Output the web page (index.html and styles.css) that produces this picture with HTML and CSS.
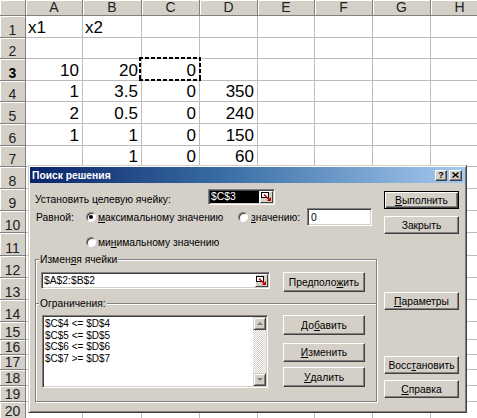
FILE: index.html
```html
<!DOCTYPE html>
<html lang="ru">
<head>
<meta charset="utf-8">
<title>Поиск решения</title>
<link rel="stylesheet" href="styles.css">
</head>
<body>
<div class="sheet">
  <div class="corner"></div>
  <div class="ch">A</div><div class="ch">B</div><div class="ch">C</div><div class="ch">D</div><div class="ch">E</div><div class="ch">F</div><div class="ch">G</div><div class="ch">H</div>

  <div class="rh">1</div><div class="c t">x1</div><div class="c t">x2</div><div class="c"></div><div class="c"></div><div class="c"></div><div class="c"></div><div class="c"></div><div class="c"></div>
  <div class="rh">2</div><div class="c"></div><div class="c"></div><div class="c"></div><div class="c"></div><div class="c"></div><div class="c"></div><div class="c"></div><div class="c"></div>
  <div class="rh act">3</div><div class="c n">10</div><div class="c n">20</div><div class="c n cur">0</div><div class="c"></div><div class="c"></div><div class="c"></div><div class="c"></div><div class="c"></div>
  <div class="rh">4</div><div class="c n">1</div><div class="c n">3.5</div><div class="c n">0</div><div class="c n">350</div><div class="c"></div><div class="c"></div><div class="c"></div><div class="c"></div>
  <div class="rh">5</div><div class="c n">2</div><div class="c n">0.5</div><div class="c n">0</div><div class="c n">240</div><div class="c"></div><div class="c"></div><div class="c"></div><div class="c"></div>
  <div class="rh">6</div><div class="c n">1</div><div class="c n">1</div><div class="c n">0</div><div class="c n">150</div><div class="c"></div><div class="c"></div><div class="c"></div><div class="c"></div>
  <div class="rh">7</div><div class="c"></div><div class="c n">1</div><div class="c n">0</div><div class="c n">60</div><div class="c"></div><div class="c"></div><div class="c"></div><div class="c"></div>
  <div class="rh">8</div><div class="c"></div><div class="c"></div><div class="c"></div><div class="c"></div><div class="c"></div><div class="c"></div><div class="c"></div><div class="c"></div>
  <div class="rh">9</div><div class="c"></div><div class="c"></div><div class="c"></div><div class="c"></div><div class="c"></div><div class="c"></div><div class="c"></div><div class="c"></div>
  <div class="rh">10</div><div class="c"></div><div class="c"></div><div class="c"></div><div class="c"></div><div class="c"></div><div class="c"></div><div class="c"></div><div class="c"></div>
  <div class="rh">11</div><div class="c"></div><div class="c"></div><div class="c"></div><div class="c"></div><div class="c"></div><div class="c"></div><div class="c"></div><div class="c"></div>
  <div class="rh">12</div><div class="c"></div><div class="c"></div><div class="c"></div><div class="c"></div><div class="c"></div><div class="c"></div><div class="c"></div><div class="c"></div>
  <div class="rh">13</div><div class="c"></div><div class="c"></div><div class="c"></div><div class="c"></div><div class="c"></div><div class="c"></div><div class="c"></div><div class="c"></div>
  <div class="rh">14</div><div class="c"></div><div class="c"></div><div class="c"></div><div class="c"></div><div class="c"></div><div class="c"></div><div class="c"></div><div class="c"></div>
  <div class="rh">15</div><div class="c"></div><div class="c"></div><div class="c"></div><div class="c"></div><div class="c"></div><div class="c"></div><div class="c"></div><div class="c"></div>
  <div class="rh">16</div><div class="c"></div><div class="c"></div><div class="c"></div><div class="c"></div><div class="c"></div><div class="c"></div><div class="c"></div><div class="c"></div>
  <div class="rh">17</div><div class="c"></div><div class="c"></div><div class="c"></div><div class="c"></div><div class="c"></div><div class="c"></div><div class="c"></div><div class="c"></div>
  <div class="rh">18</div><div class="c"></div><div class="c"></div><div class="c"></div><div class="c"></div><div class="c"></div><div class="c"></div><div class="c"></div><div class="c"></div>
  <div class="rh">19</div><div class="c"></div><div class="c"></div><div class="c"></div><div class="c"></div><div class="c"></div><div class="c"></div><div class="c"></div><div class="c"></div>
  <div class="rh">20</div><div class="c"></div><div class="c"></div><div class="c"></div><div class="c"></div><div class="c"></div><div class="c"></div><div class="c"></div><div class="c"></div>
</div>

<div class="dlg">
  <div class="title">
    <span class="title-text">Поиск решения</span>
    <span class="tbtn tq">?</span>
    <span class="tbtn tx"><svg width="7" height="6" viewBox="0 0 7 6"><path d="M0.5 0.5 L6.5 5.5 M6.5 0.5 L0.5 5.5" stroke="#000" stroke-width="1.4" fill="none"/></svg></span>
  </div>
  <div class="dbody">
    <div class="main">
      <div class="r-target">
        <span class="lbl-target">Установить целевую ячейку:</span>
        <span class="field target">
          <span class="sel">$C$3</span>
          <span class="refbtn"><svg width="11" height="10" viewBox="0 0 11 10"><rect x="0.5" y="0.5" width="7" height="5" fill="#fff" stroke="#000"/><path d="M3 2.5 L8 7.5" stroke="#c00000" stroke-width="1.5" fill="none"/><path d="M10 9 L10 5 L6 9 Z" fill="#c00000"/></svg></span>
        </span>
      </div>
      <div class="r-eq">
        <span class="lbl-eq">Равной:</span>
        <span class="opt opt-max"><span class="radio on"></span><span><u>м</u>аксимальному значению</span></span>
        <span class="opt opt-val"><span class="radio"></span><span><u>з</u>начению:</span></span>
        <span class="field val">0</span>
      </div>
      <div class="r-min">
        <span class="opt"><span class="radio"></span><span>ми<u>н</u>имальному значению</span></span>
      </div>
      <div class="frames">
        <div class="sect s1">
          <span class="legend">Измен<u>я</u>я ячейки</span>
          <div class="srow">
            <span class="field cells">
              <span class="ftext">$A$2:$B$2</span>
              <span class="refbtn"><svg width="11" height="10" viewBox="0 0 11 10"><rect x="0.5" y="0.5" width="7" height="5" fill="#fff" stroke="#000"/><path d="M3 2.5 L8 7.5" stroke="#c00000" stroke-width="1.5" fill="none"/><path d="M10 9 L10 5 L6 9 Z" fill="#c00000"/></svg></span>
            </span>
            <span class="btn guess">Предполо<u>ж</u>ить</span>
          </div>
        </div>
        <div class="sect s2">
          <span class="legend">Ограничения:</span>
          <div class="srow">
            <div class="list">
              <div class="items">
                <div>$C$4 &lt;= $D$4</div>
                <div>$C$5 &lt;= $D$5</div>
                <div>$C$6 &lt;= $D$6</div>
                <div>$C$7 &gt;= $D$7</div>
              </div>
              <div class="sb">
                <span class="sb-btn"><span class="arr-up"></span></span>
                <span class="sb-track"></span>
                <span class="sb-btn"><span class="arr-dn"></span></span>
              </div>
            </div>
            <div class="btncol">
              <span class="btn b-add">До<u>б</u>авить</span>
              <span class="btn b-edit"><u>И</u>зменить</span>
              <span class="btn b-del"><u>У</u>далить</span>
            </div>
          </div>
        </div>
      </div>
    </div>
    <div class="side">
      <span class="btn def"><u>В</u>ыполнить</span>
      <span class="btn b-close">Закрыть</span>
      <span class="btn b-params"><u>П</u>араметры</span>
      <span class="btn b-restore">Восс<u>т</u>ановить</span>
      <span class="btn b-help"><u>С</u>правка</span>
    </div>
  </div>
</div>
</body>
</html>
```

FILE: styles.css
```css
* { box-sizing: border-box; }
html, body { margin: 0; padding: 0; }
body {
  width: 477px;
  height: 418px;
  overflow: hidden;
  position: relative;
  background: #fff;
  font-family: "Liberation Sans", Arial, sans-serif;
  color: #000;
}

/* ---------- spreadsheet ---------- */
.sheet {
  display: grid;
  grid-template-columns: 26px 57px 59px 58px 58px 57px 58px 58px 58px;
  grid-template-rows: 16px 22px 21px 22px 21px 22px 22px 21px 22px 22px 22px 23px 22px 22px 22px 18px 15px 15px 16px 16px 17px;
  width: 489px;
}
.sheet > div {
  border-right: 1px solid #bcbcbc;
  border-bottom: 1px solid #bcbcbc;
  overflow: hidden;
}
.sheet .corner,
.sheet .ch,
.sheet .rh {
  background: #d4d0c8;
  border-right-color: #808080;
  border-bottom-color: #808080;
  box-shadow: inset 1px 1px #fff;
  color: #222;
}
.ch {
  display: flex;
  justify-content: center;
  align-items: flex-end;
  font-size: 14px;
  line-height: 15px;
}
.rh {
  display: flex;
  justify-content: center;
  align-items: flex-end;
  font-size: 14px;
  line-height: 14px;
}
.rh.act { font-weight: bold; color: #000; }
.c {
  display: flex;
  align-items: flex-end;
  font-size: 17px;
  line-height: 17px;
  padding-bottom: 1px;
}
.c.t { padding-left: 2px; }
.c.n { justify-content: flex-end; padding-right: 3px; }
.sheet .cur { position: relative; overflow: visible; }
.cur::after {
  content: "";
  position: absolute;
  top: -2px; right: -2px; bottom: -1px; left: -3px;
  background:
    repeating-linear-gradient(90deg, #000 0 4px, transparent 4px 6px) top left / 100% 2px no-repeat,
    repeating-linear-gradient(90deg, #000 0 4px, transparent 4px 6px) bottom left / 100% 2px no-repeat,
    repeating-linear-gradient(180deg, #000 0 4px, transparent 4px 6px) top left / 2px 100% no-repeat,
    repeating-linear-gradient(180deg, #000 0 4px, transparent 4px 6px) top right / 2px 100% no-repeat;
}

/* ---------- dialog ---------- */
.dlg {
  position: absolute;
  left: 28px;
  top: 165px;
  width: 439px;
  height: 248px;
  background: #d4d0c8;
  border: 1px solid;
  border-color: #d4d0c8 #404040 #404040 #d4d0c8;
  box-shadow: inset 1px 1px #fff, inset -1px -1px #808080;
  padding: 1px;
  font-size: 10.3px;
  line-height: 13px;
  color: #000;
}
.title {
  height: 16px;
  display: flex;
  align-items: center;
  padding: 0 3px 0 2px;
  background: linear-gradient(to right, #0a246a 0%, #3a6ea5 45%, #a6caf0 100%);
  color: #fff;
  font-weight: bold;
}
.title-text { flex: 1; }
.tbtn {
  height: 11px;
  background: #d4d0c8;
  border: 1px solid;
  border-color: #fff #404040 #404040 #fff;
  box-shadow: inset -1px -1px #808080;
  display: flex;
  align-items: center;
  justify-content: center;
  color: #000;
  font-size: 9px;
  line-height: 9px;
}
.tq { width: 12px; }
.tx { width: 13px; margin-left: 2px; }

.dbody { display: flex; padding-left: 5px; }
.main { width: 342px; }
.side {
  width: 75px;
  margin-left: 7px;
  padding-top: 8px;
  display: flex;
  flex-direction: column;
}

/* buttons */
.btn {
  display: flex;
  align-items: center;
  justify-content: center;
  height: 18px;
  background: #d4d0c8;
  border: 1px solid;
  border-color: #fff #404040 #404040 #fff;
  box-shadow: inset -1px -1px #808080;
  white-space: nowrap;
}
.btn.def {
  border-color: #000;
  box-shadow: inset 1px 1px #fff, inset -1px -1px #404040, inset -2px -2px #808080;
}
.b-close { margin-top: 7px; }
.b-params { margin-top: 58px; }
.b-restore { margin-top: 46px; }
.b-help { margin-top: 6px; }

/* fields */
.field {
  display: flex;
  align-items: center;
  background: #fff;
  border: 1px solid;
  border-color: #808080 #fff #fff #808080;
  box-shadow: inset 1px 1px #404040, inset -1px -1px #d4d0c8;
  padding: 1px;
}
.refbtn {
  width: 13px;
  height: 12px;
  margin-left: auto;
  flex: none;
  display: flex;
  align-items: center;
  justify-content: center;
  background: #d4d0c8;
  border: 1px solid;
  border-color: #fff #404040 #404040 #fff;
}
.refbtn svg { display: block; }

/* rows */
.r-target {
  display: flex;
  align-items: flex-start;
  height: 16px;
  margin-top: 6px;
}
.lbl-target { width: 173px; padding-top: 4px; white-space: nowrap; }
.target { width: 67px; height: 16px; }
.sel {
  flex: 1;
  height: 12px;
  line-height: 12px;
  background: #000;
  color: #fff;
  padding-left: 1px;
  margin-right: 1px;
}

.r-eq {
  display: flex;
  align-items: center;
  height: 18px;
  margin-top: 3px;
}
.lbl-eq { width: 51px; padding-left: 1px; }
.opt { display: flex; align-items: center; white-space: nowrap; }
.opt-max { width: 152px; }
.opt-val { width: 69px; }
.opt .radio { margin-right: 2px; }
.opt-val .radio { margin-right: 3px; }
.val { width: 65px; height: 18px; padding-left: 3px; }

.r-min {
  display: flex;
  align-items: center;
  height: 16px;
  margin-top: 8px;
  padding-left: 51px;
}

.radio {
  width: 10px;
  height: 10px;
  flex: none;
  border-radius: 50%;
  background: #fff;
  border: 1px solid;
  border-color: #808080 #fff #fff #808080;
  box-shadow: inset 1px 1px #404040;
  display: flex;
  align-items: center;
  justify-content: center;
}
.radio.on::after {
  content: "";
  width: 4px;
  height: 4px;
  border-radius: 50%;
  background: #000;
}

/* frames */
.frames {
  margin-top: 9px;
  border: 1px solid #808080;
  box-shadow: inset 1px 1px #fff, 1px 1px #fff;
}
.legend {
  display: block;
  width: fit-content;
  margin: -7px 0 0 3px;
  padding: 0 1px;
  background: #d4d0c8;
  white-space: nowrap;
}
.srow { display: flex; align-items: flex-start; }
.s1 { padding-bottom: 11px; }
.s1 .srow { margin-top: 6px; padding-left: 5px; }
.cells { width: 229px; height: 17px; }
.ftext { padding-left: 1px; }
.cells .refbtn { height: 13px; }
.guess { width: 82px; height: 20px; margin-left: 13px; }

.s2 {
  border-top: 1px solid #808080;
  box-shadow: inset 0 1px #fff;
  padding-bottom: 13px;
}
.s2 .srow { margin-top: 5px; padding-left: 6px; }
.list {
  width: 226px;
  height: 73px;
  display: flex;
  background: #fff;
  border: 1px solid;
  border-color: #808080 #fff #fff #808080;
  box-shadow: inset 1px 1px #404040, inset -1px -1px #d4d0c8;
  padding: 1px;
}
.items {
  flex: 1;
  padding: 1px 0 0 1px;
  font-size: 10px;
  line-height: 11.7px;
  white-space: nowrap;
}
.sb { width: 13px; display: flex; flex-direction: column; }
.sb-btn {
  height: 13px;
  flex: none;
  display: flex;
  align-items: center;
  justify-content: center;
  background: #d4d0c8;
  border: 1px solid;
  border-color: #d4d0c8 #404040 #404040 #d4d0c8;
  box-shadow: inset 1px 1px #fff, inset -1px -1px #808080;
}
.sb-track {
  flex: 1;
  background-image: repeating-conic-gradient(#fff 0 25%, #d4d0c8 0 50%);
  background-size: 2px 2px;
}
.arr-up, .arr-dn {
  width: 0;
  height: 0;
  border-left: 3px solid transparent;
  border-right: 3px solid transparent;
}
.arr-up { border-bottom: 3px solid #808080; }
.arr-dn { border-top: 3px solid #808080; }

.btncol {
  width: 82px;
  margin-left: 15px;
  display: flex;
  flex-direction: column;
}
.btncol .btn { height: 20px; }
.btncol .b-edit { height: 19px; margin-top: 8px; }
.btncol .b-del { margin-top: 5px; }
```
